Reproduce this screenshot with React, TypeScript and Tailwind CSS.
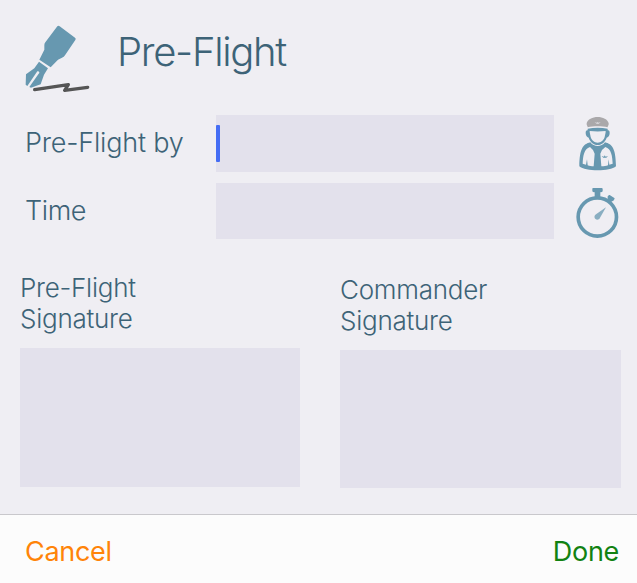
import { useState } from "react";

function PenIcon() {
  return (
    <svg viewBox="45 30 195 204" className="h-[68px] w-[65px] shrink-0" fill="none">
      <path d="M142 34q3-3 7 0l46 34q4 3 1 7l-31 46q-3 5-9 7l-12 6-22 23-34-23 15-30v-14q0-4 3-8z" fill="#6798b0" />
      <path d="M87 140l27 20-12 19-10 29-29 10-5-2 28-40a4 4 0 1 0-6-4L52 213l-5-4 1-31 25-18z" fill="#6798b0" />
      <path d="M74 224l101-15-11 17 69-9" stroke="#555" strokeWidth="10" strokeLinecap="round" strokeLinejoin="round" />
    </svg>
  );
}

function PilotIcon() {
  return (
    <svg viewBox="39 33 117 165" className="h-[55px] w-[39px]" fill="none">
      <path d="M68 67c0-4-4-6-3-12 2-12 18-19 33-19s31 7 33 19c1 6-3 8-3 12-18-4-42-4-60 0z" fill="#aaa8aa" />
      <path d="M89 52l7 1 2-2 2 2 7-1-6 4h-6z" fill="#efeef3" fillOpacity=".8" />
      <path d="M68 71c19-4 41-4 60 0l0 5c4-1 6 2 6 8 0 7-3 12-9 14-4 12-14 22-27 22s-23-10-27-22c-6-2-9-7-9-14 0-6 2-9 6-8z" fill="#6798b0" />
      <path d="M74 78c16 2 32 2 48 0 0 7-2 12-3 18-3 10-11 17-21 17s-18-7-21-17c-1-6-3-11-3-18z" fill="#efeef3" />
      <path d="M76 112c5 8 14 11 22 11s17-3 22-11c22 6 32 18 33 72-9 8-32 12-55 12s-46-4-55-12c1-54 11-66 33-72z" fill="#6798b0" />
      <path d="M75 126l9 9 5 11-3 38c-6 0-13-1-18-3l-2-18-3 16-10-3c1-22 4-45 22-50z" fill="#efeef3" />
      <path d="M121 126l-10 9-5 11 3 38c8 0 14-1 20-3l2-18 2 16 10-3c-1-22-4-45-22-50z" fill="#efeef3" />
      <path d="M110 153l7 2 2-4 3 4 7-2-5 5h-9z" fill="#6798b0" />
    </svg>
  );
}

function StopwatchIcon() {
  return (
    <svg viewBox="33 36 129 156" className="h-[52px] w-[43px]" fill="none">
      <path d="M84 39h26q3 0 3 3v6q0 4-7 4v14H89V52q-7 0-7-4v-6q0-3 2-3z" fill="#6798b0" />
      <path d="M134 60l14 9q2 2 0 4l-4 6-3-1-4 7-13-9 5-7-2-3 4-5q1-2 3-1z" fill="#6798b0" />
      <circle cx="97" cy="126" r="57.5" stroke="#6798b0" strokeWidth="11" />
      <path d="M123 97l-18 31a8.500 8.500 0 1 1-12-10z" fill="#6798b0" fillOpacity=".75" />
    </svg>
  );
}

export default function App() {
  const [preFlightBy, setPreFlightBy] = useState("");
  const [time, setTime] = useState("");

  return (
    <div className="flex h-[583px] w-[637px] flex-col overflow-hidden bg-[#efeef3] font-['Inter',sans-serif] font-light text-[#3d6377]">
      <header className="flex gap-[27px] pt-[25px] pl-[25px]">
        <PenIcon />
        <h1 className="pt-[3px] text-[40px] leading-[48px] tracking-[-1.3px]">Pre-Flight</h1>
      </header>

      <div className="mt-[22px] flex flex-col gap-[11px] pl-[25px] text-[27px] leading-[56px]">
        <div className="flex h-[57px] items-center">
          <label htmlFor="by" className="w-[191px] shrink-0 pb-[2px] tracking-[-0.2px] whitespace-nowrap">Pre-Flight by</label>
          <div className="flex h-[57px] w-[338px] shrink-0 items-center bg-[#e3e1ec]">
            <span className="h-[37px] w-[4px] rounded-[1px] bg-[#456df4]" />
            <input id="by" value={preFlightBy} onChange={(e) => setPreFlightBy(e.target.value)} className="min-w-0 flex-1 outline-none" />
          </div>
          <div className="flex w-[83px] justify-center pl-[3px]"><PilotIcon /></div>
        </div>
        <div className="flex h-[56px] items-center">
          <label htmlFor="time" className="w-[191px] shrink-0 tracking-[-0.4px]">Time</label>
          <input id="time" value={time} onChange={(e) => setTime(e.target.value)} className="h-[56px] w-[338px] shrink-0 bg-[#e3e1ec] outline-none" />
          <div className="flex w-[83px] justify-center pt-[3px] pl-[3px]"><StopwatchIcon /></div>
        </div>
      </div>

      <div className="mt-[33px] flex flex-1 gap-[40px] pl-[20px] text-[26px] leading-[31px] tracking-[-0.25px]">
        <section className="w-[280px]">
          <h2>Pre-Flight<br />Signature</h2>
          <div className="mt-[14px] h-[139px] bg-[#e3e1ec]" />
        </section>
        <section className="w-[281px] pt-[2px]">
          <h2>Commander<br />Signature</h2>
          <div className="mt-[14px] h-[138px] bg-[#e3e1ec]" />
        </section>
      </div>

      <footer className="flex h-[69px] items-center justify-between border-t border-[#c9c8cc] bg-[#fcfcfc] pt-[6px] pr-[18px] pl-[25px] text-[27px] font-normal tracking-[-0.3px]">
        <button className="text-[#ff8408]">Cancel</button>
        <button className="text-[#128212]">Done</button>
      </footer>
    </div>
  );
}
